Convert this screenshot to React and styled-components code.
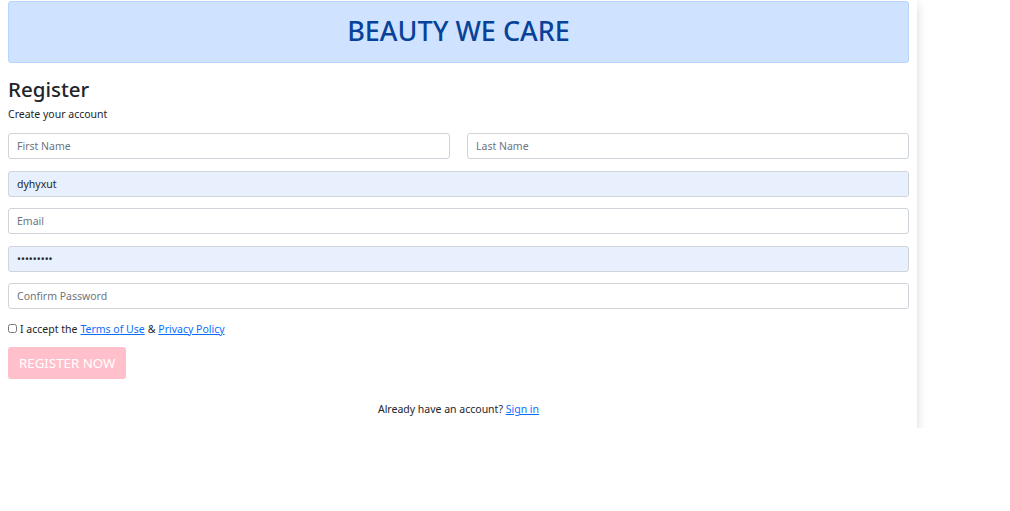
import React from 'react';
import styled, { createGlobalStyle } from 'styled-components';

const GlobalStyle = createGlobalStyle`
  html, body { margin: 0; padding: 0; background: #fff; }
  body { font-family: "Noto Sans", "Open Sans", sans-serif; color: #212529; }
  * { box-sizing: border-box; }
`;

const Card = styled.div`
  width: 917px;
  padding: 1px 8px 12px;
  background: #fff;
  box-shadow: 0 4px 10px rgba(0, 0, 0, 0.16);
`;

const Banner = styled.div`
  height: 62px;
  display: flex;
  align-items: center;
  justify-content: center;
  padding-bottom: 3px;
  background: #cfe2ff;
  border: 1px solid #b6d4fe;
  border-radius: 3px;
  color: #084298;
  font-size: 27px;
  font-weight: 500;
`;

const Title = styled.h2`
  margin: 13px 0 0;
  font-size: 20.5px;
  font-weight: 500;
  line-height: 26px;
`;

const Sub = styled.p`
  margin: 4px 0 11px;
  font-size: 10.5px;
  line-height: 16px;
`;

const Form = styled.form`
  display: flex;
  flex-direction: column;
  gap: 11.5px;
`;

const Row = styled.div`
  display: grid;
  grid-template-columns: 1fr 1fr;
  gap: 17px;
`;

const Input = styled.input`
  width: 100%;
  height: 26px;
  padding: 0 8px;
  font: inherit;
  font-size: 10.5px;
  color: #212529;
  border: 1px solid #ced4da;
  border-radius: 3px;
  background: ${(p) => (p.$filled ? '#e8f0fe' : '#fff')};
  outline: none;
  &::placeholder { color: #6c757d; }
`;

const Check = styled.label`
  display: flex;
  align-items: center;
  gap: 3px;
  margin-top: 1px;
  font-size: 10.5px;
  input { margin: 0; width: 9px; height: 9px; }
`;

const Link = styled.a`
  color: #0d6efd;
  text-decoration: underline;
`;

const Button = styled.button`
  align-self: flex-start;
  height: 32px;
  padding: 0 11px;
  border: none;
  border-radius: 3px;
  background: #ffc0cb;
  color: #fff;
  font: inherit;
  font-size: 13.3px;
  text-transform: uppercase;
`;

const Footer = styled.p`
  margin: 23px 0 0;
  text-align: center;
  font-size: 10.5px;
`;

export default function App() {
  return (
    <>
      <GlobalStyle />
      <Card>
        <Banner>BEAUTY WE CARE</Banner>
        <Title>Register</Title>
        <Sub>Create your account</Sub>
        <Form onSubmit={(e) => e.preventDefault()}>
          <Row>
            <Input placeholder="First Name" />
            <Input placeholder="Last Name" />
          </Row>
          <Input $filled defaultValue="dyhyxut" />
          <Input placeholder="Email" />
          <Input $filled type="password" defaultValue="123456789" />
          <Input type="password" placeholder="Confirm Password" />
          <Check>
            <input type="checkbox" /> I accept the <Link href="#">Terms of Use</Link> &amp; <Link href="#">Privacy Policy</Link>
          </Check>
          <Button>Register now</Button>
        </Form>
        <Footer>
          Already have an account? <Link href="#">Sign in</Link>
        </Footer>
      </Card>
    </>
  );
}
